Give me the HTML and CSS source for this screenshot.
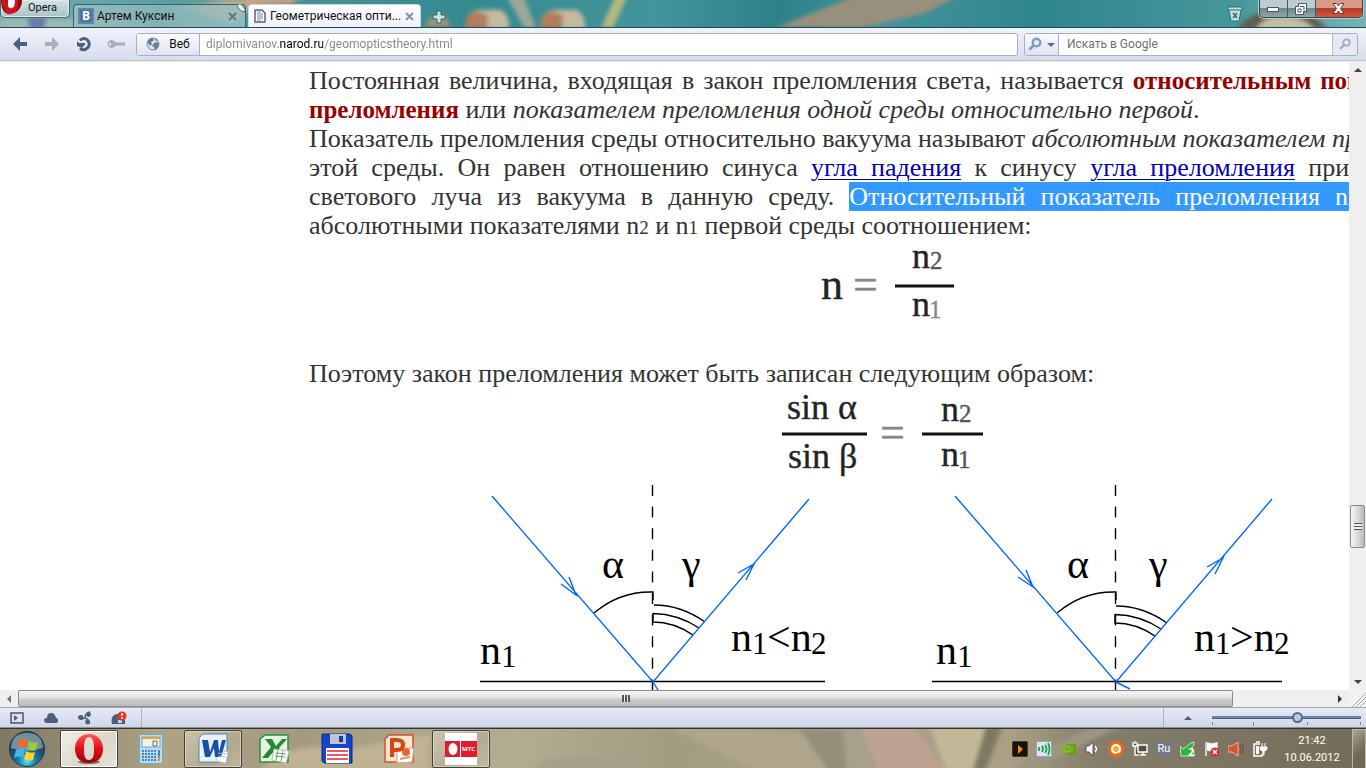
FILE: index.html
```html
<!DOCTYPE html>
<html lang="ru">
<head>
<meta charset="utf-8">
<title>Геометрическая оптика</title>
<link rel="stylesheet" href="styles.css">
</head>
<body>
<header class="titlebar">
  <svg class="wallpaper" viewBox="0 0 1366 28" preserveAspectRatio="none" aria-hidden="true">
    <defs>
      <filter id="soft" x="-20%" y="-20%" width="140%" height="140%"><feGaussianBlur stdDeviation="2"/></filter>
      <linearGradient id="teal"><stop offset="0" stop-color="#6fb0b2"/><stop offset=".2" stop-color="#4c9499"/><stop offset=".34" stop-color="#348a8f"/><stop offset=".48" stop-color="#42959b"/><stop offset=".57" stop-color="#2d8287"/><stop offset=".64" stop-color="#43949a"/><stop offset=".76" stop-color="#2f868c"/><stop offset=".9" stop-color="#45969b"/><stop offset="1" stop-color="#78b2b5"/></linearGradient>
    </defs>
    <rect width="1366" height="28" fill="url(#teal)"/>
    <g filter="url(#soft)">
      <path d="M0 20h75v10H0z" fill="#9fb9b4"/><path d="M27 18h20l-3 12H30z" fill="#6c78ae"/>
      <path d="M180 8l55-10 20 6-20 20z" fill="#b9aa92"/><path d="M240 -5h65l-14 9-43 2z" fill="#c9a184"/>
      <path d="M425 28q4-15 20-12l6 12z" fill="#a58f70"/>
      <path d="M507-3h17l12 32h-12z" fill="#9ba895"/>
      <path d="M466 30q-2-20 16-20h18q10 5 9 20z" fill="#c6baa0"/><path d="M466 30q-2-18 12-18l10 4-1 14z" fill="#b27d59"/>
      <path d="M541 30q-2-20 16-20h19q10 5 9 20z" fill="#c6baa0"/><path d="M541 30q-2-18 12-18l10 4-1 14z" fill="#b27d59"/>
      <path d="M615-3h12l-14 32h-12z" fill="#b5b77e"/>
      <path d="M775 29L855-4h104l-35 18-65 15z" fill="#98907b"/>
      <path d="M1237 30q16-21 44-19 30 0 47 19z" fill="#625c50"/><path d="M1256 30q8-13 26-13 22 0 32 13z" fill="#c8bea0"/>
    </g>
  </svg>
  <button class="opera-menu" type="button">
    <svg width="22" height="15" viewBox="0 0 22 15" aria-hidden="true"><path d="M1 0h20q0 7-5 11-4 4-9 3Q1 11 1 0" fill="#d3131c"/><path d="M7 0h7q0 7-3 8-3 1-4-2z" fill="#fff"/><path d="M1 0q1 11 7 14-8-1-8-14M17 0h4q0 8-7 13 4-5 3-13" fill="#8f0c12"/></svg>
    <span>Opera</span>
  </button>
  <nav class="tabs" aria-label="Вкладки">
    <div class="tab">
      <svg width="16" height="16" viewBox="0 0 16 16" aria-hidden="true"><rect width="16" height="16" rx="1" fill="#4c75a3"/><rect x="1" y="1" width="14" height="14" fill="none" stroke="#7295bb"/><text x="4" y="12" class="vk">B</text></svg>
      <a class="tab-name" href="#">Артем Куксин</a>
      <button class="close" type="button" aria-label="Закрыть"><svg width="9" height="9" viewBox="0 0 9 9"><path d="M1 1l7 7M8 1L1 8" stroke="#5d7a85" stroke-width="2"/></svg></button>
      <svg class="curl" width="9" height="9" viewBox="0 0 9 9" aria-hidden="true"><path d="M0 0q1 7 8 8V5L4 0z" fill="#edf5f5" stroke="#456a70"/></svg>
    </div>
    <div class="tab active">
      <svg width="12" height="14" viewBox="0 0 12 14" aria-hidden="true"><path d="M1 1h7l3 3v9H1z" fill="#fff" stroke="#56657c" stroke-width="1.500"/><path d="M3 5h6M3 7h6M3 9h6M3 11h4M3 3h4" stroke="#7c899c"/></svg>
      <a class="tab-name" href="#">Геометрическая опти...</a>
      <button class="close" type="button" aria-label="Закрыть"><svg width="9" height="9" viewBox="0 0 9 9"><path d="M1 1l7 7M8 1L1 8" stroke="#8791a4" stroke-width="2"/></svg></button>
    </div>
    <button class="new-tab" type="button" aria-label="Новая вкладка"><svg width="14" height="14" viewBox="0 0 14 14"><path d="M5 1h4v4h4v4H9v4H5V9H1V5h4z" fill="#c9e2e3" stroke="#25686d"/></svg></button>
  </nav>
  <button class="closed-tabs" type="button" aria-label="Закрытые вкладки"><svg width="16" height="16" viewBox="0 0 16 16"><path d="M1 1h14v3h-1l-2 11H4L2 4H1z" fill="#c5dfe0" stroke="#2b7075"/><path d="M2 4h12" stroke="#2b7075"/><path d="M6 7l4 5M10 7l-4 5" stroke="#336e74" stroke-width="1.500"/></svg></button>
  <div class="window-buttons">
    <button type="button" class="minimize" aria-label="Свернуть"><svg width="12" height="6" viewBox="0 0 12 6"><rect x=".5" y="1.500" width="11" height="4" fill="#fff" stroke="#495668"/></svg></button>
    <button type="button" class="restore" aria-label="Восстановить"><svg width="12" height="12" viewBox="0 0 12 12"><path d="M3.500.5h8v8h-3v3h-8v-8h3z" fill="#fff" stroke="#495668"/><path d="M3 6h3v3H3zM5 3.500h4v4" fill="none" stroke="#495668"/></svg></button>
    <button type="button" class="quit" aria-label="Закрыть окно"><svg width="13" height="11" viewBox="0 0 13 11"><path d="M1 .5h3.500l2 2.500 2-2.500H12L8.500 5.500l3.500 5H8.500l-2-2.500-2 2.500H1l3.500-5z" fill="#fff" stroke="#5d3a40"/></svg></button>
  </div>
</header>

<div class="toolbar">
  <button type="button" class="tool" aria-label="Назад"><svg width="16" height="14" viewBox="0 0 16 14"><path d="M8 0L1 7l7 7V9h7V5H8z" fill="#4d607b"/></svg></button>
  <button type="button" class="tool" aria-label="Вперёд"><svg width="16" height="14" viewBox="0 0 16 14"><path d="M8 0l7 7-7 7V9H1V5h7z" fill="#a5aebd"/></svg></button>
  <button type="button" class="tool" aria-label="Обновить"><svg width="16" height="16" viewBox="0 0 16 16"><path d="M4 4.500Q7 1 11 3.500q4 4 1 8-4 4-8 1" fill="none" stroke="#4d607b" stroke-width="3"/><path d="M1 10V5l2 2h6v2q-2 1-3 3z" fill="#4d607b"/></svg></button>
  <button type="button" class="tool" aria-label="Пароли"><svg width="20" height="12" viewBox="0 0 20 12"><path d="M5.500 2a4 4 0 1 0 3.500 6h2l1-1 1 1 1-1 1 1 1-1 1 1h2V4.500H9.500A4 4 0 0 0 5.500 2m-1.500 3a1.200 1.200 0 1 1 0 2.400A1.200 1.200 0 0 1 4 5" fill="#a5aebd" fill-rule="evenodd"/></svg></button>
  <form class="address">
    <button type="button" class="site-badge"><svg width="14" height="14" viewBox="0 0 14 14" aria-hidden="true"><circle cx="7" cy="7" r="6" fill="#dce2ee" stroke="#74849c"/><path d="M2 3l3-2 3 1-1 2-2 1 1 2-2 2-2-3zM8 6l3-1 2 2-2 5-2 1-1-3-2-1zM9 1l3 2-2 1z" fill="#6b7b95"/></svg><span>Веб</span></button>
    <input class="url" type="text" aria-label="Адрес" value="diplomivanov.narod.ru/geomopticstheory.html">
  </form>
  <form class="search">
    <button type="button" class="engine" aria-label="Поисковая система"><svg width="27" height="14" viewBox="0 0 27 14"><circle cx="8.500" cy="5.500" r="3.800" fill="#e8eefb" stroke="#869bbd" stroke-width="2.400"/><path d="M5.500 8.500L1.500 12.500" stroke="#869bbd" stroke-width="3"/><path d="M19 6h8l-4 4z" fill="#5a6a84"/></svg></button>
    <input class="query" type="text" aria-label="Поиск" placeholder="Искать в Google">
    <button type="submit" class="go" aria-label="Найти"><svg width="12" height="12" viewBox="0 0 12 12"><circle cx="7.500" cy="4.500" r="3.200" fill="none" stroke="#a5a9b8" stroke-width="1.800"/><path d="M5 7l-4 4" stroke="#a5a9b8" stroke-width="2.200"/></svg></button>
  </form>
</div>

<div class="browser-view">
  <main class="viewport">
    <article class="lesson">
      <p>
        <span class="row">Постоянная величина, входящая в закон преломления света, называется <b>относительным показателем</b></span>
        <b>преломления</b> или <i>показателем преломления одной среды относительно первой</i>.
      </p>
      <p>
        <span class="row">Показатель преломления среды относительно вакуума называют <i>абсолютным показателем преломления</i></span>
        <span class="row">этой среды. Он равен отношению синуса <a href="#">угла падения</a> к синусу <a href="#">угла преломления</a> при переходе</span>
        <span class="row">светового луча из вакуума в данную среду. <mark>Относительный показатель преломления n связан с</mark></span>
        абсолютными показателями n<small>2</small> и n<small>1</small> первой среды соотношением:
      </p>
      <svg class="formula first" width="150" height="90" viewBox="810 241 150 90" role="img" aria-label="n = n2 / n1">
        <text x="821" y="299" font-size="44">n</text><text x="853" y="299" font-size="44" class="pale">=</text>
        <text x="912" y="268" font-size="36">n</text><text x="930" y="269" font-size="25" class="faded">2</text>
        <path d="M895 286h59" class="bar"/>
        <text x="912" y="316" font-size="36">n</text><text x="929" y="318" font-size="25" class="pale">1</text>
      </svg>
      <p>Поэтому закон преломления может быть записан следующим образом:</p>
      <svg class="formula" width="216" height="90" viewBox="777 388 216 90" role="img" aria-label="sin α / sin β = n2 / n1">
        <text x="787" y="419" font-size="36">sin α</text><path d="M782 434h85M922 434h61" class="bar"/>
        <text x="788" y="468" font-size="36">sin β</text><text x="880" y="447" font-size="44" class="pale">=</text>
        <text x="941" y="421" font-size="36">n</text><text x="959" y="422" font-size="25" class="faded">2</text>
        <text x="941" y="466" font-size="36">n</text><text x="958" y="468" font-size="25" class="faded">1</text>
      </svg>
      <svg class="rays" viewBox="309 478 1152 230" role="img" aria-label="Преломление света на границе двух сред">
        <g class="line">
          <path d="M652.500 485V690M1115.500 485V690" stroke-dasharray="11 10.600"/>
          <path d="M480 681.500h345M932 681.500h350"/>
          <path d="M594 613Q620 591 653 592v8M654 605Q681 605 705 622M653 613.500Q678 614 699 628M653 613v9Q674 622 693 635"/>
          <path d="M1057 613Q1083 591 1116 592v8M1116 606Q1143 606 1167 623M1115 614.500Q1140 615 1161 629M1115 614v9Q1136 623 1155 636"/>
        </g>
        <g class="ray">
          <path d="M492 496L653 682 809 499M653 682l5 8M561 584l15 11-7-18M738 573l16-9-8 16"/>
          <path d="M955 496l161 186L1272 499M1116 682l14 7M1018 577l15 10-7-17M1207 567l16-9-8 16"/>
        </g>
        <g class="label" font-size="42">
          <text x="602" y="578">α</text><text x="682" y="578">γ</text><text x="480" y="664">n</text><text x="501" y="667" font-size="31">1</text>
          <text x="731" y="651">n</text><text x="752" y="654" font-size="31">1</text><text x="767" y="651">&lt;n</text><text x="811" y="654" font-size="31">2</text>
          <text x="1067" y="578">α</text><text x="1149" y="578">γ</text><text x="936" y="664">n</text><text x="957" y="667" font-size="31">1</text>
          <text x="1194" y="651">n</text><text x="1215" y="654" font-size="31">1</text><text x="1230" y="651">&gt;n</text><text x="1274" y="654" font-size="31">2</text>
        </g>
      </svg>
    </article>
  </main>
  <div class="vscroll" aria-hidden="true"><i class="arrow up"></i><div class="track"><div class="thumb"></div></div><i class="arrow down"></i></div>
  <div class="hscroll" aria-hidden="true"><i class="arrow left"></i><div class="track"><div class="thumb"></div></div><i class="arrow right"></i></div>
  <svg class="grip" viewBox="0 0 17 17" aria-hidden="true"><path d="M3 17L17 3M7 17L17 7M11 17l6-6" stroke="#aaa"/></svg>
</div>

<div class="statusbar">
  <div class="panel-tools">
    <button type="button" aria-label="Панели"><svg width="14" height="12" viewBox="0 0 14 12"><rect x="1" y="1" width="12" height="10" fill="none" stroke="#4d607b" stroke-width="1.600"/><path d="M4 3l4 3-4 3z" fill="#4d607b"/></svg></button>
    <button type="button" aria-label="Opera Link"><svg width="14" height="12" viewBox="0 0 14 12"><path d="M3 11Q0 11 0 8q0-2 3-2 0-5 4-5t5 5q2 0 2 3 0 2-3 2z" fill="#4d607b"/></svg></button>
    <button type="button" aria-label="Opera Unite"><svg width="14" height="14" viewBox="0 0 14 14"><path d="M0 5q0 3 3 3l4-1M7 7Q7 2 12 1M7 7q5 2 4 6" fill="none" stroke="#4d607b" stroke-width="1.500"/><circle cx="3" cy="6.500" r="2.400" fill="#4d607b"/><circle cx="10.500" cy="3.500" r="2.400" fill="#4d607b"/><circle cx="9.500" cy="11" r="2.400" fill="#4d607b"/></svg></button>
    <button type="button" aria-label="Opera Turbo"><svg width="16" height="14" viewBox="0 0 16 14"><path d="M1 13Q-1 4 6 3q6-1 8 4v6z" fill="#4d607b"/><path d="M7 9h4v3H7z" fill="#cbd4e5"/><circle cx="11" cy="5" r="4.500" fill="#e73620"/><path d="M11 2v3M11 6v2" stroke="#fff" stroke-width="1.500"/></svg></button>
  </div>
  <div class="zoom-tools">
    <button type="button" aria-label="Масштаб"><svg width="8" height="4" viewBox="0 0 8 4"><path d="M0 4l4-4 4 4z" fill="#4d607b"/></svg></button>
    <input type="range" aria-label="Масштаб страницы" min="0" max="100" value="58">
  </div>
</div>

<footer class="taskbar">
  <svg class="wallpaper" viewBox="0 0 1366 40" preserveAspectRatio="none" aria-hidden="true">
    <defs><linearGradient id="sand"><stop offset="0" stop-color="#7e7862"/><stop offset=".12" stop-color="#aea385"/><stop offset=".22" stop-color="#a39a81"/><stop offset=".38" stop-color="#b3ab92"/><stop offset=".49" stop-color="#a49c81"/><stop offset=".62" stop-color="#a8a08a"/><stop offset=".74" stop-color="#aba086"/><stop offset=".8" stop-color="#857e6a"/><stop offset="1" stop-color="#746c5a"/></linearGradient></defs>
    <rect width="1366" height="40" fill="url(#sand)"/>
    <g filter="url(#soft)">
      <path d="M260 42Q290 10 350 20l80-15v37z" fill="#c0b293"/><path d="M550 30l70-5 30 17H530z" fill="#a79f8a"/>
      <path d="M668-2h80l70 12 25 32h-90z" fill="#aea58c"/><path d="M800 0h42l5 42h-20z" fill="#968e78"/>
      <path d="M860-2h55l29 44h-65z" fill="#bda292"/><path d="M930-2h55l-12 44h-27z" fill="#c2b796"/><path d="M986-2h16l-16 44h-13z" fill="#7e7864"/>
      <path d="M1010 42l80-44h30l-90 44z" fill="#9d9580"/>
    </g>
  </svg>
  <button type="button" class="start" aria-label="Пуск"><svg width="38" height="38" viewBox="0 0 38 38"><defs><radialGradient id="orb" cy=".85"><stop offset="0" stop-color="#51e2fa"/><stop offset=".5" stop-color="#1b79ad"/><stop offset="1" stop-color="#234865"/></radialGradient></defs><circle cx="19" cy="19" r="17.500" fill="url(#orb)" stroke="#183a50"/><path d="M3 18Q4 3 19 3t16 15Q18 23 3 18" fill="#c1d5df" opacity=".5"/><path d="M11 10q4-3 9 0l-2 8q-5-3-9 0z" fill="#f06a28"/><path d="M21 11q5 3 9 1l-2 8q-5 2-9-1z" fill="#9bc93c"/><path d="M8 20q5-3 9 0l-2 8q-5-3-9 0z" fill="#45b5ee"/><path d="M18 21q5 3 9 1l-2 8q-5 2-9-1z" fill="#ffd12d"/></svg></button>
  <nav class="apps" aria-label="Программы">
    <button type="button" class="current" aria-label="Opera"><svg width="32" height="32" viewBox="0 0 32 32"><defs><linearGradient id="red" x2="0" y2="1"><stop offset="0" stop-color="#ff5a50"/><stop offset=".5" stop-color="#e0101a"/><stop offset="1" stop-color="#98040b"/></linearGradient></defs><ellipse cx="16" cy="29" rx="11" ry="2" fill="#5b2522" opacity=".6"/><path d="M16 1C7 1 2 8 2 16s5 14 14 14 14-6 14-14S25 1 16 1m0 3c4 0 5 5 5 12s-1 11-5 11-5-4-5-11 1-12 5-12" fill="url(#red)" fill-rule="evenodd"/></svg></button>
    <button type="button" aria-label="Калькулятор"><svg width="24" height="32" viewBox="0 0 24 32"><rect x=".5" y="1.500" width="23" height="29" rx="2" fill="#b7dcf0" stroke="#6daacb"/><rect x="3" y="4" width="18" height="10" fill="#eef3e6" stroke="#76a8c4"/><path d="M3 5h18" stroke="#f39b2c" stroke-width="2"/><path d="M14 8h4v5h-4z" fill="none" stroke="#59758c"/><path d="M3 18h15M3 21h15M3 24h15M3 27h15" stroke="#4787b8" stroke-width="2" stroke-dasharray="2 1"/><path d="M20 17v6" stroke="#4787b8" stroke-width="2"/><path d="M20 23v5" stroke="#f08a1c" stroke-width="2"/></svg></button>
    <button type="button" class="open" aria-label="Word"><svg width="32" height="32" viewBox="0 0 32 32"><path d="M6 1h24v28H2V5z" fill="#e8f1fb" stroke="#4a86c7"/><path d="M20 17l11 2-2 11-10-2z" fill="#fff" stroke="#b8c8dc"/><path d="M5 7h6l2 12 4-12h4l1 12 3-12h4l-5 17h-6l-1-9-4 9H8z" fill="#174fa5"/><path d="M21 20l8 1M21 23l7 1" stroke="#a8bddc"/></svg></button>
    <button type="button" aria-label="Excel"><svg width="32" height="32" viewBox="0 0 32 32"><path d="M6 2h23v27H1V6z" fill="#e5f4e1" stroke="#2e8d3d" stroke-width="1.500"/><path d="M6 6h7l4 7 6-7h5L20 15l7 9h-8l-4-6-6 7H3l9-11z" fill="#228b32"/><path d="M15 16l15 2-3 12-14-3z" fill="#fff" stroke="#a7c8a7"/><path d="M17 20l10 1M16 23l10 1M19 17l-2 10M24 18l-2 10" stroke="#66a36c"/></svg></button>
    <button type="button" aria-label="Сохранение"><svg width="32" height="32" viewBox="0 0 32 32"><path d="M2 1h27l2 2v27H3l-2-2V1z" fill="#1844cc" stroke="#0c2870"/><path d="M9 1h16v10H9z" fill="#c1c5d2"/><path d="M18 3h4v6h-4z" fill="#1738a5"/><path d="M5 15h23v15H5z" fill="#fff"/><path d="M6 18h21M6 22h21M6 26h21" stroke="#df2139" stroke-width="1.500"/></svg></button>
    <button type="button" aria-label="PowerPoint"><svg width="32" height="32" viewBox="0 0 32 32"><path d="M6 2h24v27H2V6z" fill="#fbe4d6" stroke="#d55226" stroke-width="1.500"/><path d="M14 16l17-1-2 14-15 1z" fill="#fff" stroke="#dba085"/><path d="M9 24V7h5q6 0 6 5t-6 5H9" fill="none" stroke="#d34916" stroke-width="4"/><circle cx="23" cy="19" r="4" fill="#e86730"/><path d="M17 26l10-2" stroke="#dd906d" stroke-width="2"/></svg></button>
    <button type="button" class="open" aria-label="МТС"><svg width="32" height="32" viewBox="0 0 32 32"><path d="M0 0h32v32H0z" fill="#fff"/><path d="M0 8h32v16H0z" fill="#e51b2c"/><ellipse cx="8" cy="16" rx="4.500" ry="6" fill="#fff"/><path d="M15.500 8v16" stroke="#fff"/><text x="17" y="18" class="mts">МТС</text></svg></button>
  </nav>
  <div class="tray">
    <svg viewBox="0 0 16 16"><rect x=".5" y=".5" width="15" height="15" rx="1" fill="#17120c" stroke="#4d3a1e"/><path d="M6 4l5 4-5 5z" fill="#f78b17"/></svg>
    <svg viewBox="0 0 16 16"><rect x=".5" y=".5" width="15" height="15" rx="1" fill="#dce5ec" stroke="#8cabc0"/><path d="M3 6v4M6 5q2 3 0 6M9 4q3 4 0 8M12 2q3 6 0 12" fill="none" stroke="#1a9c4b" stroke-width="1.700"/></svg>
    <svg viewBox="0 0 16 16"><path d="M6 3h10v11H6z" fill="#6a9e13"/><path d="M0 8q7-7 13 0-6 7-13 0m3 0q4 4 7 0-4-4-7 0" fill="none" stroke="#81b72a" stroke-width="1.500"/></svg>
    <svg viewBox="0 0 16 16"><path d="M2 5h3l4-4v14l-4-4H2z" fill="#fff" stroke="#555"/><path d="M11 5q3 3 0 6" fill="none" stroke="#fff" stroke-width="1.300"/></svg>
    <svg viewBox="0 0 16 16"><circle cx="8" cy="8" r="8" fill="#f06a12"/><circle cx="8" cy="8" r="4" fill="#f9a63e" stroke="#fff" stroke-width="2.200"/><path d="M8 12.500l5-1v3H8z" fill="#f06a12"/></svg>
    <svg viewBox="0 0 16 16"><path d="M6 4h9v7H6zM8 14h6M11 11v3M3 5v9h4M1 1v4h4V1M3 0v3" fill="#515047" stroke="#fff" stroke-width="1.400"/></svg>
    <span class="lang">Ru</span>
    <svg viewBox="0 0 16 16"><path d="M0 5l3 3 3-2 5-4 3-1v3l-2 2v4h2v5H1z" fill="#27b839" stroke="#b9f0b8"/><text x="8" y="15" class="count">2</text></svg>
    <svg viewBox="0 0 16 16"><path d="M2 1v14M3 2l5 1 5-1v7l-5 1-5-1" fill="#fff" stroke="#eee" stroke-width="1.500"/><circle cx="11" cy="11" r="4.500" fill="#e0282c"/><path d="M9 9l4 4M13 9l-4 4" stroke="#fff" stroke-width="1.500"/></svg>
    <svg viewBox="0 0 16 16"><path d="M0 5h4l6-4v14l-6-4H0z" fill="#d25535" stroke="#f5b29b"/><path d="M12 4q2 4 0 8M14 3q3 5 0 10" fill="none" stroke="#7c4335"/></svg>
    <svg viewBox="0 0 16 16"><path d="M8 3H2v12h8v-2M4 1h4" fill="none" stroke="#fff" stroke-width="1.500"/><path d="M4 5h3v8H4z" fill="#fff"/><path d="M8 6h7v2q-1 2-3 2v4h-1v-4Q9 10 8 8zM10 2v4M13 2v4" fill="#fff" stroke="#fff"/></svg>
  </div>
  <time class="clock" datetime="2012-06-10T21:42"><span>21:42</span><span>10.06.2012</span></time>
  <button type="button" class="desktop" aria-label="Рабочий стол"></button>
</footer>
</body>
</html>
```
FILE: styles.css
```css
* { box-sizing: border-box; }
body { margin: 0; height: 100vh; display: flex; flex-direction: column; overflow: hidden; background: #fff; font: 12px/16px Roboto, "Noto Sans", sans-serif; color: #111; }
button { margin: 0; padding: 0; border: 0; background: none; font: inherit; color: inherit; display: flex; align-items: center; justify-content: center; }
input { font: inherit; margin: 0; border: 0; outline: 0; min-width: 0; }
svg { flex: none; }

.titlebar { position: relative; z-index: 0; flex: none; display: flex; align-items: flex-start; height: 28px; padding-right: 3px; border-bottom: 1px solid #1c4a4e; }
.wallpaper { position: absolute; z-index: -1; inset: 0; width: 100%; height: 100%; }
.opera-menu { width: 70px; height: 18px; gap: 5px; justify-content: flex-start; align-items: flex-start; font-size: 11px; border: 1px solid #48666b; border-top: 0; border-radius: 0 0 5px 5px; background: linear-gradient(#d5e3e5, #a9c3c7); box-shadow: inset 0 0 0 1px #dfeaeb; }
.tabs { display: flex; flex: 1; gap: 2px; align-self: flex-end; align-items: flex-end; margin-left: 3px; }
.tab { position: relative; display: flex; align-items: center; gap: 3px; width: 173px; height: 23px; padding: 0 8px 0 4px; border: 1px solid #35666b; border-bottom: 0; border-radius: 4px 4px 0 0; background: linear-gradient(90deg, #a4bfc0cc, #8fb6bacc 50%, #9cc2c4cc); }
.tab.active { padding: 0 7px 0 5px; gap: 4px; border-color: #cfd6e4; background: linear-gradient(#fff, #eef1fa); }
.vk { font: bold 12px "Open Sans", sans-serif; fill: #fff; }
.tab-name { flex: 1; color: #111; text-decoration: none; white-space: nowrap; }
.close { width: 9px; height: 9px; }
.curl { position: absolute; top: -1px; right: -1px; }
.new-tab { width: 32px; height: 21px; }
.closed-tabs { margin: 6px 16px 0 0; }
.window-buttons { display: flex; width: 104px; height: 18px; border: 1px solid #30484e; border-top: 0; border-radius: 0 0 5px 5px; overflow: hidden; box-shadow: 0 0 0 1px #b6cdd0; }
.window-buttons button { flex: 28; background: linear-gradient(#bccdd0 45%, #6e898e 50%, #8ea9ac); border-right: 1px solid #42595d; }
.window-buttons .quit { flex: 48; border: 0; background: linear-gradient(#d89a8a 45%, #b8392a 50%, #d15a3c); }

.toolbar { flex: none; display: flex; align-items: center; height: 33px; padding: 0 8px 0 4px; background: linear-gradient(#f0f2fb, #d8ddec); border-bottom: 1px solid #b8c0d2; }
.tool { width: 32px; height: 24px; }
.address, .search { display: flex; height: 23px; border: 1px solid #a9afc0; border-radius: 3px; overflow: hidden; background: #fff; }
.address { flex: 1; margin-left: 4px; }
.search { width: 334px; margin-left: 6px; }
.site-badge { width: 63px; gap: 9px; background: linear-gradient(#fafbff, #dfe3f0); border-right: 1px solid #a9afc0; }
.url { flex: 1; padding: 0 6px; -webkit-text-fill-color: transparent; background: linear-gradient(90deg, #858585 79px, #000 79px, #000 123px, #858585 123px); -webkit-background-clip: text; background-clip: text; }
.engine { width: 34px; background: linear-gradient(#fafbff, #dfe3f0); border-right: 1px solid #a9afc0; }
.query { flex: 1; padding: 0 8px; }
.query::placeholder { color: #707070; opacity: 1; }
.go { width: 25px; background: #e7eaf4; border-left: 1px solid #b8bdcb; }

.browser-view { flex: 1; min-height: 0; display: grid; grid-template: minmax(0, 1fr) 17px / minmax(0, 1fr) 17px; }
.viewport { overflow: hidden; padding: 4px 0 0 309px; background: #fff; border-top: 1px solid #eeeef2; }
.lesson { width: 1152px; font: 26px/29px "Liberation Serif", serif; color: #333; text-align: justify; }
.lesson p { margin: 0; }
.row { display: block; white-space: nowrap; text-align-last: justify; }
.lesson b { color: #900; font-size: 25px; line-height: 1; }
.lesson a { color: #00b; text-decoration-thickness: 1px; text-underline-offset: 3px; }
.lesson small { font-size: 19px; line-height: 1; }
.lesson mark { color: #fff; background: #39f; }
.formula { display: block; margin: 0 auto; fill: #222; }
.formula.first { margin-bottom: 28px; margin-top: 1px; }
.formula text, .label text { font-family: "Liberation Serif", serif; }
.formula text { stroke: currentColor; stroke-width: .4; }
.formula .pale { fill: #888; stroke: #888; }
.formula .faded { fill: #555; stroke: #555; }
.bar { stroke: #111; stroke-width: 3; }
.rays { display: block; width: 100%; }
.line { fill: none; stroke: #000; stroke-width: 1.4; }
.ray { fill: none; stroke: #06f; stroke-width: 1.4; }

.vscroll, .hscroll { display: flex; background: #efefef; }
.vscroll { flex-direction: column; }
.track { flex: 1; display: flex; }
.vscroll .track { flex-direction: column; }
.thumb { display: grid; place-items: center; border: 1px solid #8b8b8b; border-radius: 2px; }
.vscroll .thumb { height: 43px; margin: 0 1px; background: linear-gradient(90deg, #f5f5f5, #dadada 50%, #bbb); }
.vscroll .track::before { content: ""; flex: 425; }
.vscroll .track::after { content: ""; flex: 125; }
.hscroll .thumb { flex: 1215; background: linear-gradient(#f5f5f5, #e2e2e2 48%, #cfcfcf 52%, #bbb); }
.hscroll .track::after { content: ""; flex: 98; }
.thumb::after { content: ""; width: 8px; height: 7px; background: repeating-linear-gradient(90deg, #555 0 2px, #eee 2px 3px); }
.vscroll .thumb::after { background: repeating-linear-gradient(#555 0 1px, #eee 1px 3px); }
.arrow { width: 18px; height: 17px; display: grid; place-items: center; }
.arrow::before { content: ""; border: 4px solid transparent; }
.arrow.up::before { border-bottom-color: #444; border-top: 0; }
.arrow.down::before { border-top-color: #444; border-bottom: 0; }
.arrow.left::before { border-right-color: #777; border-left: 0; }
.arrow.right::before { border-left-color: #333; border-right: 0; }
.grip { width: 17px; height: 17px; background: #f2f2f2; }

.statusbar { flex: none; display: flex; justify-content: space-between; height: 21px; border-top: 1px solid #a3a8b2; background: linear-gradient(#e7eaf6, #d1d6e8); border-bottom: 1px solid #8b919c; }
.panel-tools { display: flex; width: 142px; padding-right: 5px; border-right: 1px solid #aeb4c2; }
.panel-tools button { flex: 1; }
.zoom-tools { display: flex; align-items: center; width: 203px; padding-right: 5px; border-left: 1px solid #aeb4c2; }
.zoom-tools button { width: 48px; height: 19px; }
.zoom-tools input { flex: 1; height: 19px; appearance: none; background: linear-gradient(#778aa2, #778aa2) 0 14px / 1px 3px no-repeat, linear-gradient(#778aa2, #778aa2) 28% 14px / 1px 4px no-repeat, linear-gradient(#778aa2, #778aa2) 64% 14px / 1px 3px no-repeat, linear-gradient(#778aa2, #778aa2) 100% 14px / 1px 3px no-repeat; }
.zoom-tools input::-webkit-slider-runnable-track { height: 3px; background: #6f87a4; border-bottom: 1px solid #48607d; }
.zoom-tools input::-webkit-slider-thumb { appearance: none; width: 11px; height: 11px; margin-top: -4px; border: 2px solid #506b8b; border-radius: 50%; background: #b5cbe2; }

.taskbar { position: relative; z-index: 0; flex: none; display: flex; align-items: center; height: 40px; border-top: 1px solid #34342c; }
.start { width: 54px; height: 39px; }
.apps { display: flex; gap: 4px; flex: 1; margin-left: 6px; }
.apps button { width: 58px; height: 38px; border: 1px solid transparent; border-radius: 2px; }
.apps .open { border-color: #45423a; background: linear-gradient(135deg, #d9d3c3b0, #b6ac94a0 60%, #cbc2aca0); box-shadow: inset 0 0 0 1px #e2dac8b0; }
.apps .current { border-color: #45423a; background: linear-gradient(135deg, #f0eee8, #dcd6c8 60%, #e8e4da); box-shadow: inset 0 0 0 1px #fff; }
.mts { font: bold 6px "Open Sans", sans-serif; fill: #fff; }
.count { font: bold 11px "Open Sans", sans-serif; fill: #fff; }
.tray { display: flex; align-items: center; }
.tray svg { width: 16px; height: 16px; margin: 0 4px; }
.lang { width: 16px; height: 15px; margin: 0 4px; font-size: 11px; line-height: 15px; text-align: center; color: #fff; background: #77798a; }
.clock { display: flex; flex-direction: column; width: 80px; font-size: 11px; line-height: 17px; text-align: center; color: #fff; }
.desktop { width: 14px; height: 39px; border: 1px solid #bdb7a8; border-bottom: 0; background: linear-gradient(135deg, #aaa493, #6f6958 60%); }
```
